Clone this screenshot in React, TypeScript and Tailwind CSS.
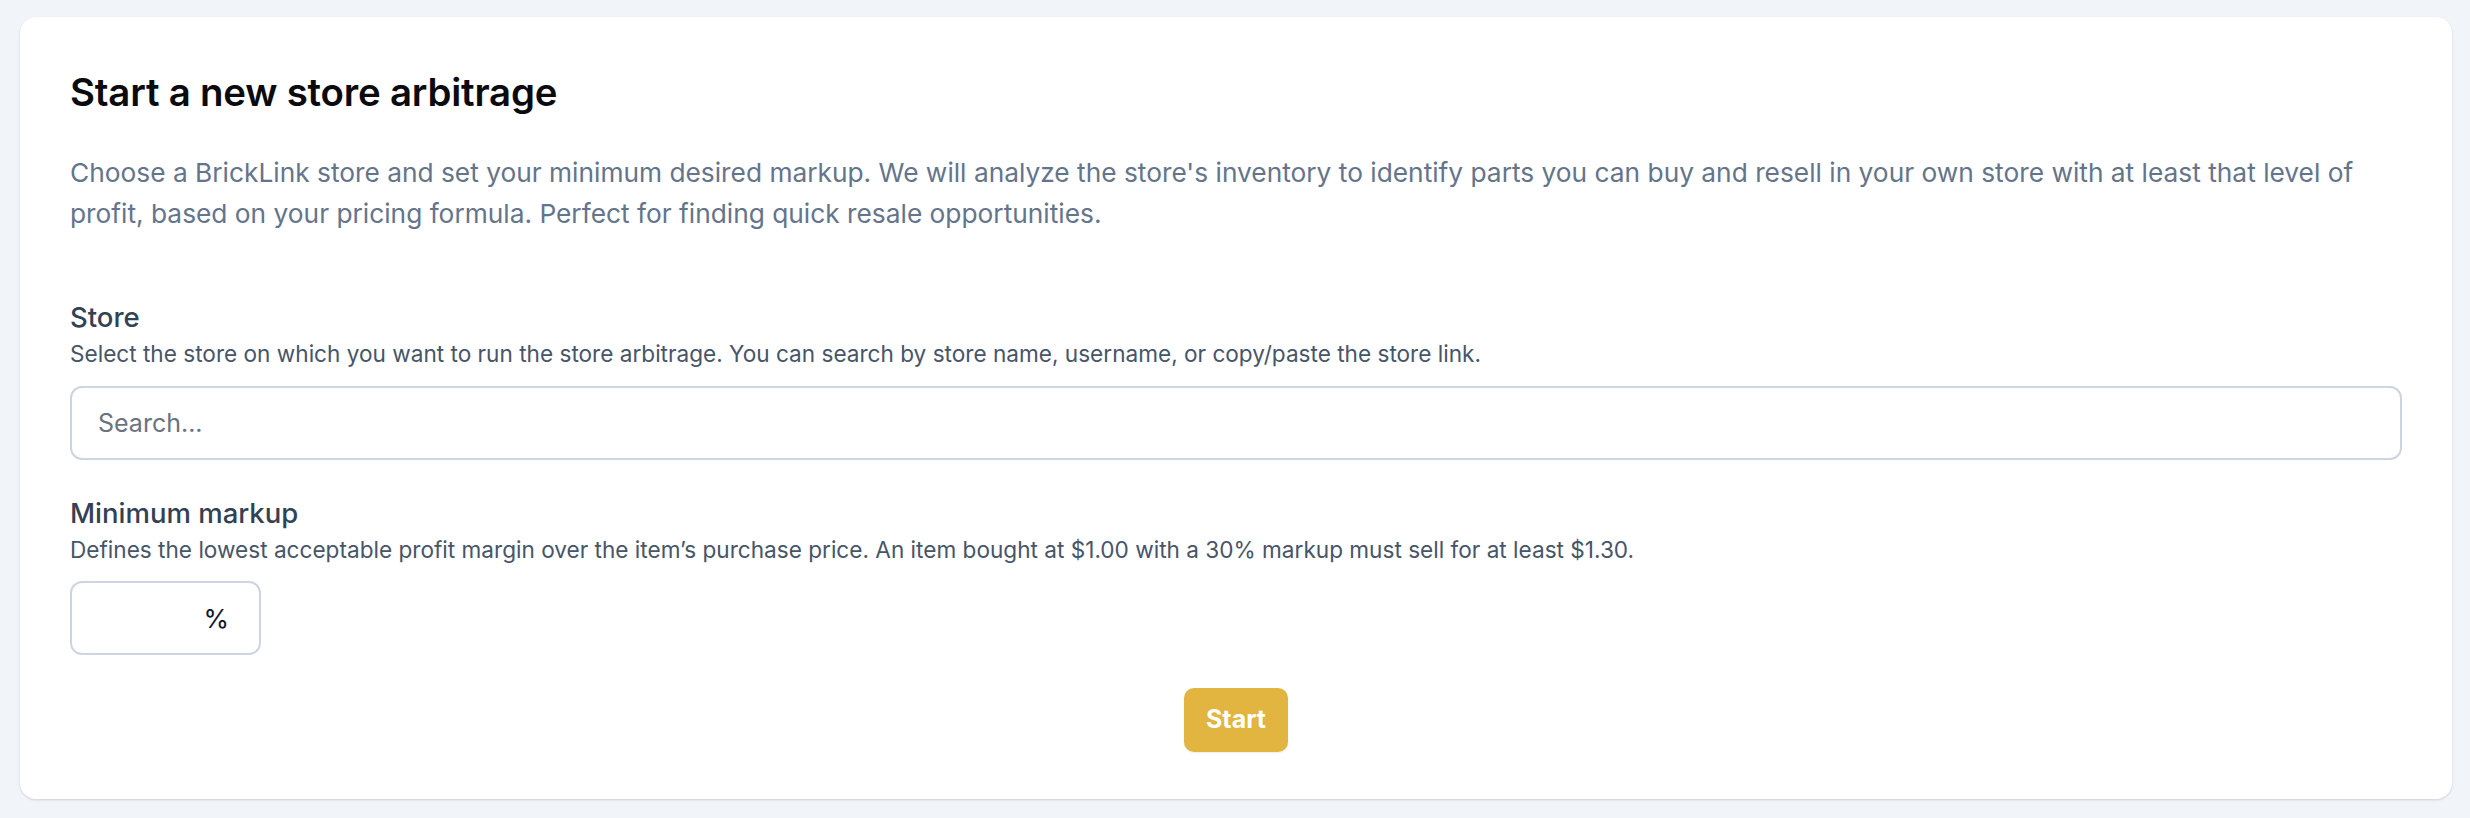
import React from "react";

export default function App() {
  return (
    <div
      className="min-h-screen w-full bg-[#f1f5f9] pt-[17px] pb-[18px] pl-[20px] pr-[18px]"
      style={{ fontFamily: "Inter, 'Noto Sans', sans-serif" }}
    >
      <div className="rounded-[16px] bg-white shadow-[0_1px_3px_rgba(15,23,42,0.10),0_1px_2px_rgba(15,23,42,0.06)] px-[50px] pt-[50px] pb-[47px]">
        <h2 className="text-[38.4px] leading-[50px] font-semibold text-[#0b0b0f] tracking-[-0.2px]">
          Start a new store arbitrage
        </h2>
        <p className="mt-[35px] text-[26.3px] leading-[41px] text-[#64748b]">
          Choose a BrickLink store and set your minimum desired markup. We will analyze the store's inventory to identify parts you can buy and resell in your own store with at least that level of profit, based on your pricing formula. Perfect for finding quick resale opportunities.
        </p>

        <div className="mt-[64px]">
          <div className="text-[27.5px] leading-[38px] font-medium text-[#334155]">Store</div>
          <div className="mt-[2px] text-[22.6px] leading-[32px] text-[#475569]">
            Select the store on which you want to run the store arbitrage. You can search by store name, username, or copy/paste the store link.
          </div>
          <input
            type="text"
            placeholder="Search..."
            className="mt-[16px] block h-[74px] w-full rounded-[12px] border-2 border-[#cdd5e0] bg-white pl-[26px] text-[25px] text-[#0f172a] placeholder:text-[#6b7280] outline-none"
          />
        </div>

        <div className="mt-[34px]">
          <div className="text-[27.5px] leading-[38px] font-medium text-[#334155]">Minimum markup</div>
          <div className="mt-[2px] text-[22.6px] leading-[32px] text-[#475569]">
            Defines the lowest acceptable profit margin over the item’s purchase price. An item bought at $1.00 with a 30% markup must sell for at least $1.30.
          </div>
          <div className="mt-[15px] flex h-[74px] w-[191px] items-center rounded-[12px] border-2 border-[#cdd5e0] bg-white pr-[30px]">
            <input type="text" className="min-w-0 flex-1 bg-transparent pl-[26px] text-[25px] outline-none" />
            <span className="text-[26px] text-[#0f172a]">%</span>
          </div>
        </div>

        <div className="mt-[33px] flex justify-center">
          <button className="h-[64px] w-[104px] rounded-[10px] bg-[#e1b53f] text-[25px] font-bold text-white shadow-[0_1px_2px_rgba(0,0,0,0.08)]">
            Start
          </button>
        </div>
      </div>
    </div>
  );
}
